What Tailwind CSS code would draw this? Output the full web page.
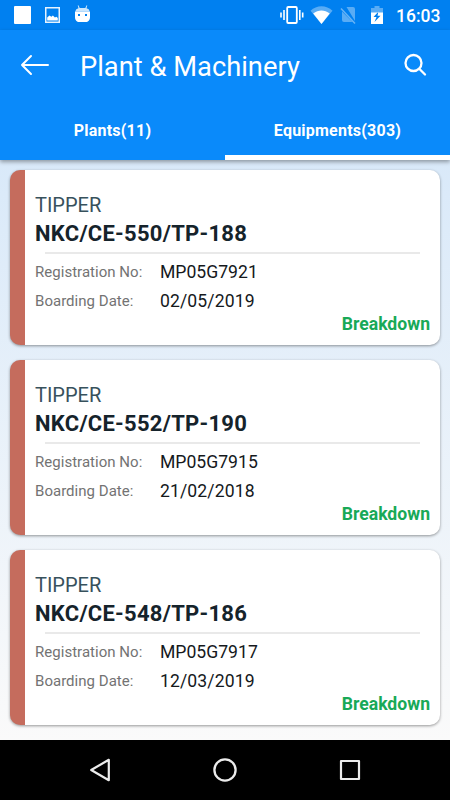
<!DOCTYPE html>
<html lang="en">
<head>
  <meta charset="UTF-8" />
  <meta name="viewport" content="width=device-width, initial-scale=1.0"/>
  <title>Plant &amp; Machinery</title>
  <script src="https://cdn.jsdelivr.net/npm/@tailwindcss/browser@4"></script>
</head>
<body class="font-[Roboto,sans-serif] bg-black">
  <div class="w-[450px] h-[800px] flex flex-col overflow-hidden">
    <!-- Status bar -->
    <div class="h-[30px] shrink-0 bg-[#0080f0] flex items-center text-white">
      <svg class="w-[150px] h-[30px]" viewBox="0 0 150 30" fill="currentColor">
        <rect x="14" y="6" width="17" height="18" rx="1"/>
        <path fill-rule="evenodd" opacity=".9" d="M45 7h15v16H45zM46.500 8.500v13h12v-13z"/>
        <path d="M47.200 20.500v-3l2.200-2 2 1.300 1.500-1.300 2 2 1.500-.7 1.400 1.200v2.500z"/>
        <path opacity=".8" d="M75.500 11.500c0-2 1.300-2.700 3-3.200l-.8-2.800.7-.3 1.300 2.700h5.600l1.300-2.700.7.300-.8 2.800c1.700.5 3 1.200 3 3.200z"/>
        <path fill-rule="evenodd" d="M75 11.500h15v5.500c0 3.500-2 5-4 5h-7c-2 0-4-1.500-4-5zM78 14v2h2v-2zM85 14v2h2v-2z"/>
      </svg>
      <svg class="ml-[122px] w-[120px] h-[30px]" viewBox="272 0 120 30" fill="currentColor">
        <rect x="287.200" y="7" width="9.600" height="16" rx="1" fill="none" stroke="currentColor" stroke-width="1.800"/>
        <path d="M281 12.500v5M284 10v10M299.800 10v10M302.700 12.500v5" fill="none" stroke="currentColor" stroke-width="1.600"/>
        <path opacity=".35" d="M310.500 10.700c6-6 16-6 22 0L321.500 24z"/>
        <path d="M313.200 13.500c5-4 11.500-4 16.500 0L321.500 24z"/>
        <path opacity=".35" d="M346.500 7H353q2 0 2 2v12zM342 11.500 352.500 22H344q-2 0-2-2z"/>
        <path opacity=".4" d="M341 8.500l14 15" stroke="currentColor" stroke-width="1.500"/>
        <path opacity=".35" d="M371 13V8h3.500V6h5v2h3.500v5z"/>
        <path fill-rule="evenodd" d="M371 12.500h12V24h-12zM378.500 11.500 373.500 17h3L374.500 22 380.500 15.700h-3z"/>
      </svg>
      <span class="ml-[4px] pt-[2px] text-[17.500px] font-medium leading-[28px]">16:03</span>
    </div>

    <!-- App bar with tabs -->
    <header class="relative z-10 h-[130px] shrink-0 bg-[#0a8afa] text-white shadow-[0_2px_4px_rgba(0,0,0,0.35)] flex flex-col">
      <div class="h-[70px] flex items-center pl-5 pr-[22px]">
        <svg class="w-[30px] h-[24px]" viewBox="0 0 30 24" fill="none" stroke="currentColor" stroke-width="2" stroke-linecap="round" stroke-linejoin="round">
          <path d="M11 3 2 12l9 9M2 12h26"/>
        </svg>
        <h1 class="ml-[30px] pt-[3px] text-[27.300px] leading-[34px] whitespace-nowrap">Plant &amp; Machinery</h1>
        <svg class="ml-auto w-[24px] h-[24px]" viewBox="0 0 24 24" fill="none" stroke="currentColor" stroke-width="2.300" stroke-linecap="round">
          <circle cx="9.500" cy="10" r="8"/>
          <path d="M15.500 16l5.500 5.500"/>
        </svg>
      </div>
      <div class="flex h-[60px] text-[16px] font-bold tracking-[0.230px]">
        <div class="w-1/2 flex items-center justify-center pt-[2px]">Plants(11)</div>
        <div class="w-1/2 flex items-center justify-center pt-[7px] border-b-[5px] border-white">Equipments(303)</div>
      </div>
    </header>

    <!-- Equipment list -->
    <main class="h-[580px] shrink-0 px-2.5 pt-2.5 flex flex-col gap-[15px] bg-linear-to-b from-[#d9e9f9] to-[#fafafa]">
      <article class="h-[175px] rounded-[10px] bg-white border-l-[15px] border-[#c56c5d] shadow-[0_1px_3px_rgba(0,0,0,0.4)] pl-2.5 pr-2.5 pt-[23px]">
        <p class="text-[20px] leading-[25px] text-[#37515c]">TIPPER</p>
        <h2 class="text-[22px] leading-[31px] font-bold tracking-[0.270px] text-[#15232b]">NKC/CE-550/TP-188</h2>
        <div class="mx-2.5 mt-[3px] h-[2px] bg-[#e9e9e9]"></div>
        <div class="flex items-center h-[29px] mt-[3px]">
          <span class="w-[125px] pt-[2px] text-[15px] tracking-[0.030px] text-[#737373]">Registration No:</span>
          <span class="pt-[2px] text-[17.600px] text-[#15191c]">MP05G7921</span>
        </div>
        <div class="flex items-center h-[29px]">
          <span class="w-[125px] pt-[2px] text-[15px] tracking-[0.030px] text-[#737373]">Boarding Date:</span>
          <span class="pt-[2px] text-[17.600px] tracking-[0.100px] text-[#15191c]">02/05/2019</span>
        </div>
        <p class="text-right text-[17.600px] leading-[18px] font-bold text-[#18a957]">Breakdown</p>
      </article>

      <article class="h-[175px] rounded-[10px] bg-white border-l-[15px] border-[#c56c5d] shadow-[0_1px_3px_rgba(0,0,0,0.4)] pl-2.5 pr-2.5 pt-[23px]">
        <p class="text-[20px] leading-[25px] text-[#37515c]">TIPPER</p>
        <h2 class="text-[22px] leading-[31px] font-bold tracking-[0.270px] text-[#15232b]">NKC/CE-552/TP-190</h2>
        <div class="mx-2.5 mt-[3px] h-[2px] bg-[#e9e9e9]"></div>
        <div class="flex items-center h-[29px] mt-[3px]">
          <span class="w-[125px] pt-[2px] text-[15px] tracking-[0.030px] text-[#737373]">Registration No:</span>
          <span class="pt-[2px] text-[17.600px] text-[#15191c]">MP05G7915</span>
        </div>
        <div class="flex items-center h-[29px]">
          <span class="w-[125px] pt-[2px] text-[15px] tracking-[0.030px] text-[#737373]">Boarding Date:</span>
          <span class="pt-[2px] text-[17.600px] tracking-[0.100px] text-[#15191c]">21/02/2018</span>
        </div>
        <p class="text-right text-[17.600px] leading-[18px] font-bold text-[#18a957]">Breakdown</p>
      </article>

      <article class="h-[175px] rounded-[10px] bg-white border-l-[15px] border-[#c56c5d] shadow-[0_1px_3px_rgba(0,0,0,0.4)] pl-2.5 pr-2.5 pt-[23px]">
        <p class="text-[20px] leading-[25px] text-[#37515c]">TIPPER</p>
        <h2 class="text-[22px] leading-[31px] font-bold tracking-[0.270px] text-[#15232b]">NKC/CE-548/TP-186</h2>
        <div class="mx-2.5 mt-[3px] h-[2px] bg-[#e9e9e9]"></div>
        <div class="flex items-center h-[29px] mt-[3px]">
          <span class="w-[125px] pt-[2px] text-[15px] tracking-[0.030px] text-[#737373]">Registration No:</span>
          <span class="pt-[2px] text-[17.600px] text-[#15191c]">MP05G7917</span>
        </div>
        <div class="flex items-center h-[29px]">
          <span class="w-[125px] pt-[2px] text-[15px] tracking-[0.030px] text-[#737373]">Boarding Date:</span>
          <span class="pt-[2px] text-[17.600px] tracking-[0.100px] text-[#15191c]">12/03/2019</span>
        </div>
        <p class="text-right text-[17.600px] leading-[18px] font-bold text-[#18a957]">Breakdown</p>
      </article>
    </main>

    <!-- Navigation bar -->
    <nav class="h-[60px] shrink-0 bg-black flex items-center justify-between px-[88px] text-[#ececec]">
      <svg class="w-6 h-6" viewBox="0 0 24 24" fill="none" stroke="currentColor" stroke-width="2.200" stroke-linejoin="round">
        <path d="M20.800 1.800v20.400L3.200 12z"/>
      </svg>
      <svg class="w-6 h-6" viewBox="0 0 24 24" fill="none" stroke="currentColor" stroke-width="2.300">
        <circle cx="12" cy="12" r="10.600"/>
      </svg>
      <svg class="w-6 h-6" viewBox="0 0 24 24" fill="none" stroke="currentColor" stroke-width="2.200" stroke-linejoin="round">
        <rect x="3" y="3" width="18" height="18"/>
      </svg>
    </nav>
  </div>
</body>
</html>
